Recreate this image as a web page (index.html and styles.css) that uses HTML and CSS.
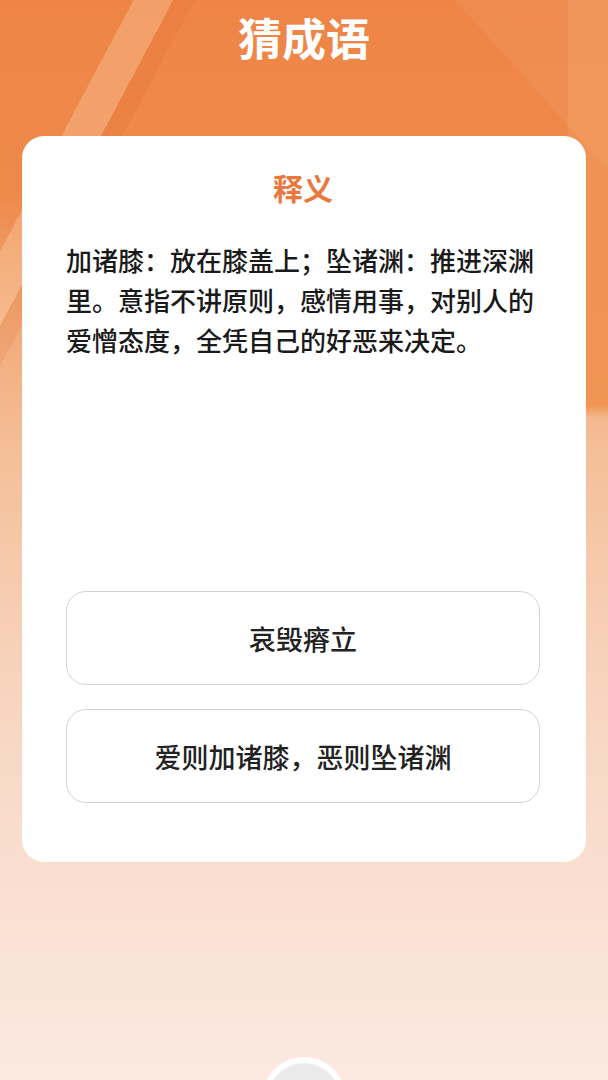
FILE: index.html
```html
<!DOCTYPE html>
<html lang="zh-CN">
<head>
    <meta charset="UTF-8">
    <meta name="viewport" content="width=device-width, initial-scale=1.0">
    <title>猜成语</title>
    <link rel="stylesheet" href="styles.css">
</head>
<body>
    <div class="page">
        <h1 class="page-title">猜成语</h1>

        <div class="card">
            <h2 class="card-title">释义</h2>
            <p class="meaning">加诸膝：放在膝盖上；坠诸渊：推进深渊里。意指不讲原则，感情用事，对别人的爱憎态度，全凭自己的好恶来决定。</p>

            <div class="options">
                <button class="option">哀毁瘠立</button>
                <button class="option">爱则加诸膝，恶则坠诸渊</button>
            </div>
        </div>

        <div class="fab"></div>
    </div>
</body>
</html>
```

FILE: styles.css
```css
html, body {
    margin: 0;
    padding: 0;
}
body {
    font-family: "Noto Sans CJK SC", "Noto Sans", sans-serif;
    background: #fbe9e0;
}
.page {
    height: 1080px;
    overflow: hidden;
    display: flex;
    flex-direction: column;
    background:
        linear-gradient(118deg, transparent 118px, rgba(255, 226, 200, 0.28) 118px, rgba(255, 226, 200, 0.28) 153px, rgba(214, 96, 36, 0.14) 153px, rgba(214, 96, 36, 0.14) 172px, transparent 172px),
        linear-gradient(48deg, transparent 1061px, rgba(255, 255, 255, 0.05) 1061px),
        linear-gradient(180deg, #ef9152 0, #f09454 405px, #f3b88f 418px, rgba(243, 184, 143, 0) 432px) right top / 40px 432px no-repeat,
        linear-gradient(180deg, #ee8546 0, #ef8a4c 200px, #f09a60 255px, #f2ab7a 330px, #f4bf98 450px, #f6cdb2 600px, #f8d9c7 760px, #f9dfd1 880px, #fbe9e0 1080px);
}
.page > * {
    flex-shrink: 0;
}
.page-title {
    margin: 10px 0 0;
    height: 126px;
    font-size: 44px;
    line-height: 54px;
    font-weight: 700;
    color: #fff;
    text-align: center;
}
.card {
    margin: 0 22px;
    height: 726px;
    box-sizing: border-box;
    padding: 0 46px 59px 44px;
    background: #fff;
    border-radius: 22px;
    display: flex;
    flex-direction: column;
}
.card-title {
    margin: 31px 0 0;
    font-size: 30px;
    line-height: 40px;
    font-weight: 700;
    color: #ea773c;
    text-align: center;
}
.meaning {
    margin: 33px 0 0;
    font-size: 26px;
    line-height: 40px;
    font-weight: 500;
    color: #1a1a1a;
}
.options {
    margin-top: auto;
    display: flex;
    flex-direction: column;
    gap: 24px;
}
.option {
    height: 94px;
    width: 100%;
    background: #fff;
    border: 1.5px solid #d3d3d3;
    border-radius: 20px;
    font-family: inherit;
    font-size: 27px;
    font-weight: 500;
    color: #222;
    cursor: pointer;
}
.fab {
    width: 84px;
    height: 84px;
    box-sizing: border-box;
    margin: 195px auto 0;
    border-radius: 50%;
    background: #ebebeb;
    border: 6px solid #fff;
}
```
